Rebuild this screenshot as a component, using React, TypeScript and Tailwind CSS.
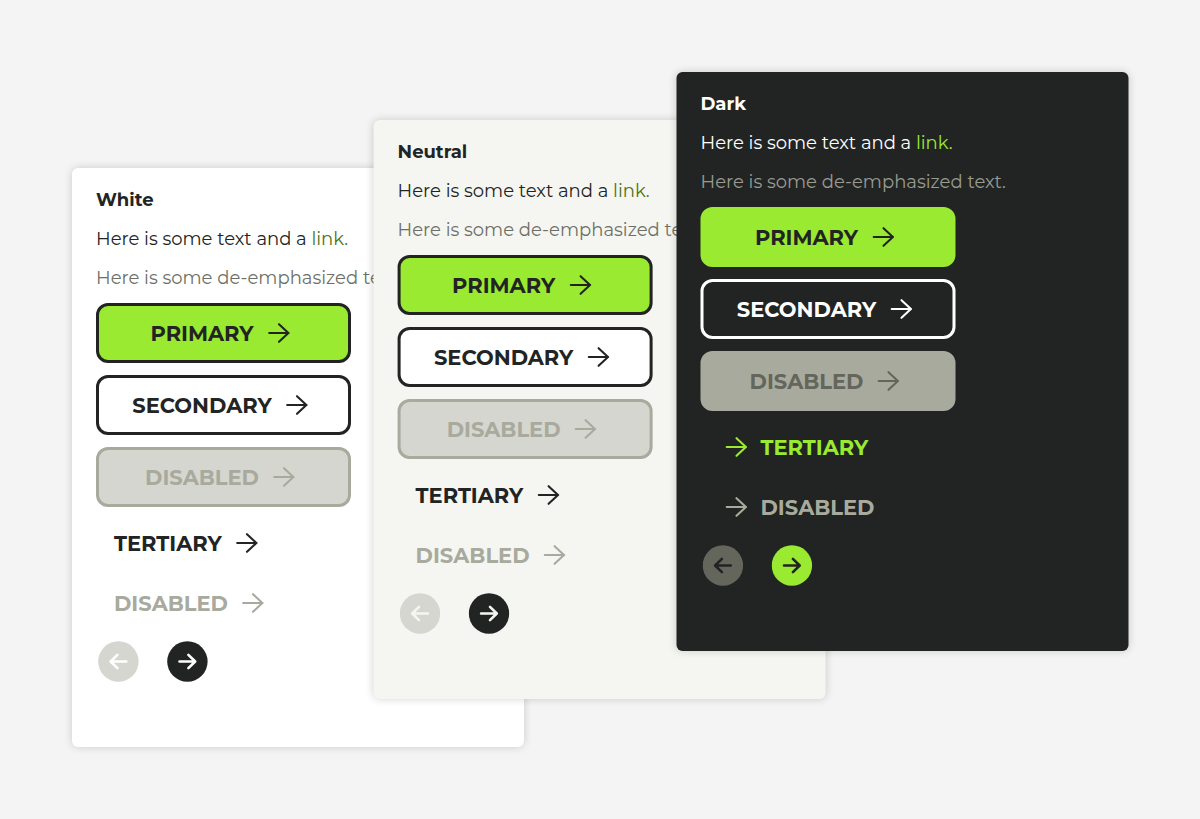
function Arrow() {
  return (
    <svg width="36" height="36" viewBox="0 0 36 36" fill="none" stroke="currentColor" strokeWidth="2.1" strokeLinecap="round" strokeLinejoin="round" className="shrink-0">
      <path d="M8.2 18H27.6M18 9.2L27.4 18L18 26.8" />
    </svg>
  );
}

function RoundArrow({ left, className }: { left?: boolean; className: string }) {
  return (
    <button className={`flex h-[41px] w-[41px] items-center justify-center ${className}`}>
      <svg width="41" height="41" viewBox="0 0 41 41" fill="none" stroke="currentColor" strokeWidth="2.6" strokeLinecap="round" strokeLinejoin="round">
        <circle cx="20.4" cy="20.5" r="20.2" className="fill-(--disc)" stroke="none" />
        <path d={left ? "M28.3 20.5H13M19.4 13.9L12.6 20.5L19.4 27.1" : "M12.5 20.5H27.8M21.4 13.9L28.2 20.5L21.4 27.1"} />
      </svg>
    </button>
  );
}

type Theme = {
  title: string;
  card: string;
  link: string;
  muted: string;
  primary: string;
  secondary: string;
  disabled: string;
  tertiary: string;
  tertiaryDisabled: string;
  prev: string;
  next: string;
  iconFirst?: boolean;
};

const themes: Theme[] = [
  {
    title: "White",
    card: "mt-24 bg-white text-[#222423]",
    link: "text-[#4b741b]",
    muted: "text-[#6e7067]",
    primary: "border-[#222423] bg-[#99ea30] text-[#222423]",
    secondary: "border-[#222423] bg-white",
    disabled: "border-[#a8aa9e] bg-[#d5d6cf] text-[#a8aa9e]",
    tertiary: "text-[#222423]",
    tertiaryDisabled: "text-[#a8aa9e]",
    prev: "[--disc:#d5d6cf] text-white",
    next: "[--disc:#222423] text-white",
  },
  {
    title: "Neutral",
    card: "mt-12 -ml-[150px] -translate-x-[0.4px] bg-[#f5f6f1] text-[#222423]",
    link: "text-[#4b741b]",
    muted: "text-[#6e7067]",
    primary: "border-[#222423] bg-[#99ea30] text-[#222423]",
    secondary: "border-[#222423] bg-white",
    disabled: "border-[#a8aa9e] bg-[#d5d6cf] text-[#a8aa9e]",
    tertiary: "text-[#222423]",
    tertiaryDisabled: "text-[#a8aa9e]",
    prev: "[--disc:#d5d6cf] text-[#f5f6f1]",
    next: "[--disc:#222423] text-[#f5f6f1]",
  },
  {
    title: "Dark",
    card: "-ml-[150px] translate-x-[0.5px] bg-[#222423] text-white",
    link: "text-[#99ea30]",
    muted: "text-[#999b91]",
    primary: "border-[#99ea30] bg-[#99ea30] text-[#222423]",
    secondary: "border-white",
    disabled: "border-[#a8aa9e] bg-[#a8aa9e] text-[#64665c]",
    tertiary: "text-[#99ea30]",
    tertiaryDisabled: "text-[#a8aa9e]",
    prev: "[--disc:#64665c] text-[#222423]",
    next: "[--disc:#99ea30] text-[#222423]",
    iconFirst: true,
  },
];

function BoxButton({ label, className }: { label: string; className: string }) {
  return (
    <button className={`flex h-[60px] w-[255px] items-center justify-center gap-[7px] rounded-xl border-3 text-[21px] font-bold ${className}`}>
      <span>{label}</span>
      <Arrow />
    </button>
  );
}

function TextButton({ label, iconFirst, className }: { label: string; iconFirst?: boolean; className: string }) {
  return (
    <button className={`flex h-[60px] items-center pl-[18px] text-[21px] font-bold ${iconFirst ? "gap-1.5" : "gap-[7px]"} ${className}`}>
      {iconFirst && <Arrow />}
      <span className="pt-px">{label}</span>
      {!iconFirst && <Arrow />}
    </button>
  );
}

function Card({ t }: { t: Theme }) {
  return (
    <section className={`isolate h-[579px] w-[452px] shrink-0 rounded-md px-6 pt-[19px] shadow-[0_0_9px_rgba(0,0,0,0.17)] ${t.card}`}>
      <div className="flex flex-col gap-3 text-[18px] leading-[27px]">
        <h2 className="font-bold">{t.title}</h2>
        <p>
          Here is some text and a <span className={t.link}>link.</span>
        </p>
        <p className={t.muted}>Here is some de-emphasized text.</p>
      </div>
      <div className="mt-[11px] flex flex-col gap-3 leading-[27px]">
        <BoxButton label="PRIMARY" className={t.primary} />
        <BoxButton label="SECONDARY" className={t.secondary} />
        <BoxButton label="DISABLED" className={t.disabled} />
      </div>
      <div className="mt-1.5 flex flex-col items-start">
        <TextButton label="TERTIARY" iconFirst={t.iconFirst} className={t.tertiary} />
        <TextButton label="DISABLED" iconFirst={t.iconFirst} className={t.tertiaryDisabled} />
      </div>
      <div className="mt-2 flex gap-7 pl-0.5">
        <RoundArrow left className={t.prev} />
        <RoundArrow className={t.next} />
      </div>
    </section>
  );
}

export default function App() {
  return (
    <main className="flex h-[819px] w-[1200px] items-start overflow-hidden bg-[#f4f4f4] pt-[72px] pl-[72px] font-[Montserrat,Inter,sans-serif]">
      {themes.map((t) => (
        <Card key={t.title} t={t} />
      ))}
    </main>
  );
}
